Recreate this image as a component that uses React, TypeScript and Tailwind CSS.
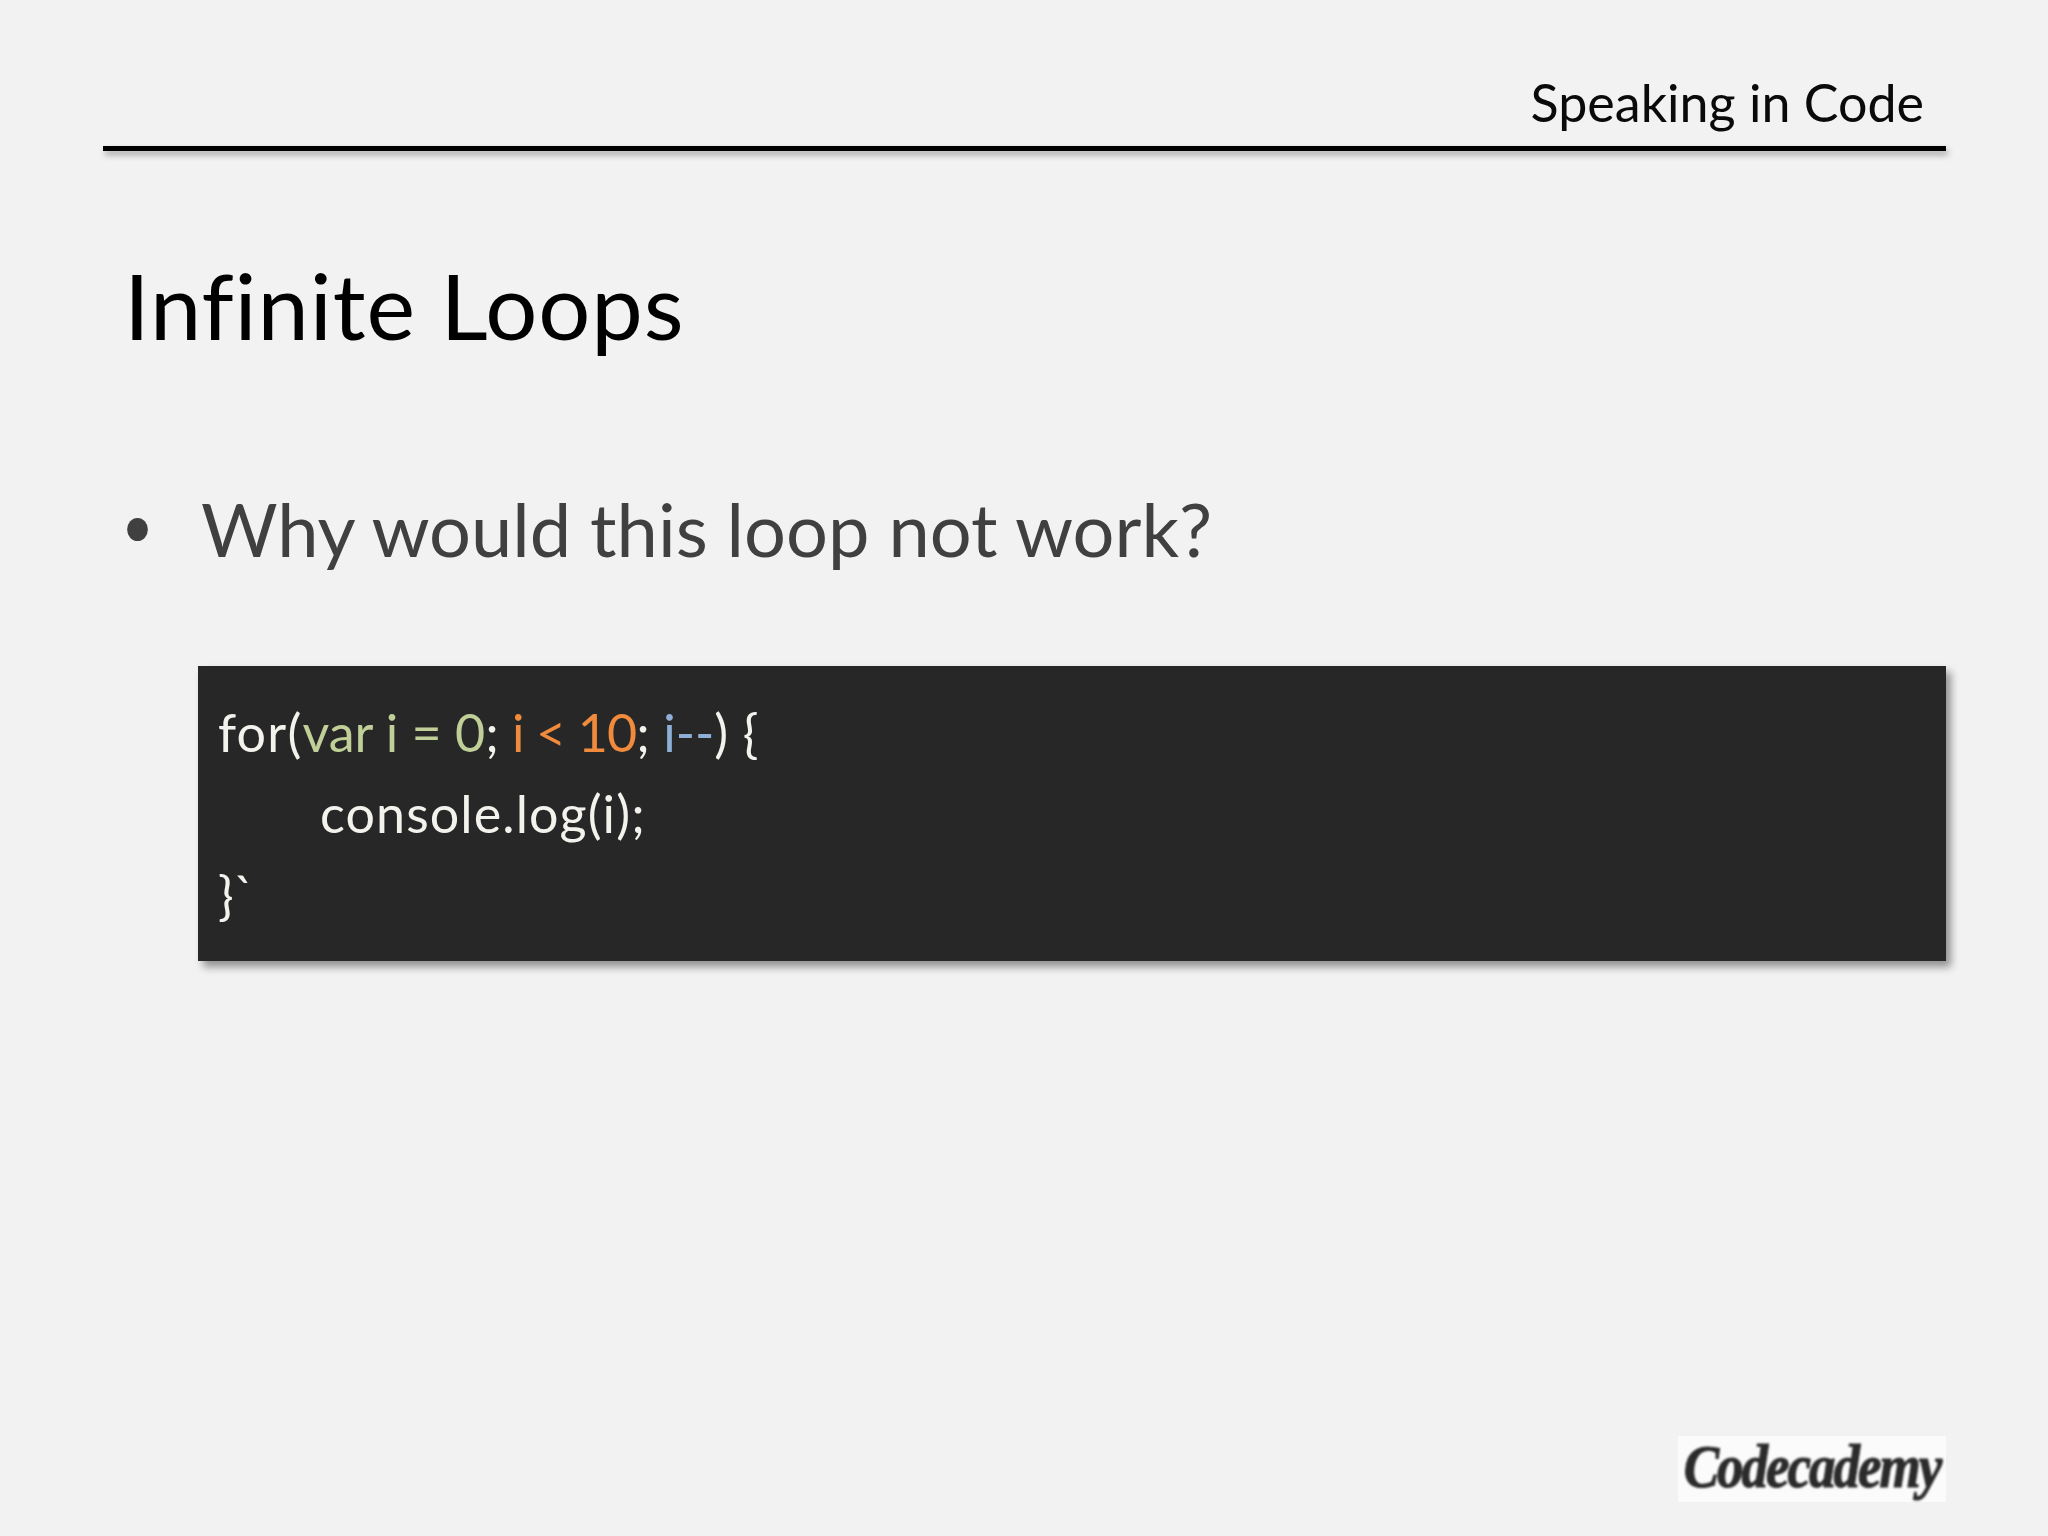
import React from 'react';

const FONT = "font-['Lato','Carlito','Open_Sans',sans-serif]";

const App: React.FC = () => {
  return (
    <div className={`w-[2048px] h-[1536px] overflow-hidden bg-[#f3f2f2] ${FONT} flex flex-col pl-[103px] pr-[102px]`}>
      {/* Header */}
      <header className="h-[146px] flex items-end justify-end pr-[22px] pb-[16px]">
        <span className="text-[52px] leading-[56px] text-[#0a0a0a]">Speaking in Code</span>
      </header>
      <div className="h-[5px] bg-black shadow-[2px_4px_6px_rgba(0,0,0,0.35)]" />

      {/* Title */}
      <h1 className="mt-[102px] pl-[21px] text-[92px] leading-[104px] tracking-[0.9px] text-black font-normal">
        Infinite Loops
      </h1>

      {/* Bullet */}
      <div className="mt-[130px] flex items-center text-[#404040] text-[74px] leading-[84px]">
        <span className="w-[23px] h-[23px] rounded-full bg-[#404040] ml-[23px] mr-[31px] shrink-0 scale-x-90" />
        <span className="ml-[21px]">Why would this loop not work?</span>
      </div>

      {/* Code block */}
      <div className="mt-[95px] ml-[95px] h-[295px] bg-[#272727] shadow-[5px_6px_8px_rgba(0,0,0,0.4)] pl-[20px] pt-[26px] text-[#f3f2ec] text-[52px] leading-[81px]">
        <div>
          <span className="tracking-[1.2px]">for(</span>
          <span className="text-[#bfcf97]">var i = 0</span>; <span className="text-[#f08a3c] tracking-[-0.9px]">i &lt; 10</span>; <span className="text-[#8fb0d6]">i--</span><span className="tracking-[0.6px]">) {'{'}</span>
        </div>
        <div className="pl-[102px] tracking-[1.1px]">console.log(i);</div>
        <div>{'}'}`</div>
      </div>

      {/* Logo */}
      <div className="mt-auto mb-[34px] self-end w-[268px] h-[66px] bg-[#fbfbfb] flex items-center justify-center">
        <span className="font-['Liberation_Serif',serif] italic font-bold text-[53px] leading-none tracking-[-2px] text-[#2b2b2b] [-webkit-text-stroke:1px_#2b2b2b] blur-[1px] scale-y-115 -translate-y-[3px]">
          Codecademy
        </span>
      </div>
    </div>
  );
};

export default App;
